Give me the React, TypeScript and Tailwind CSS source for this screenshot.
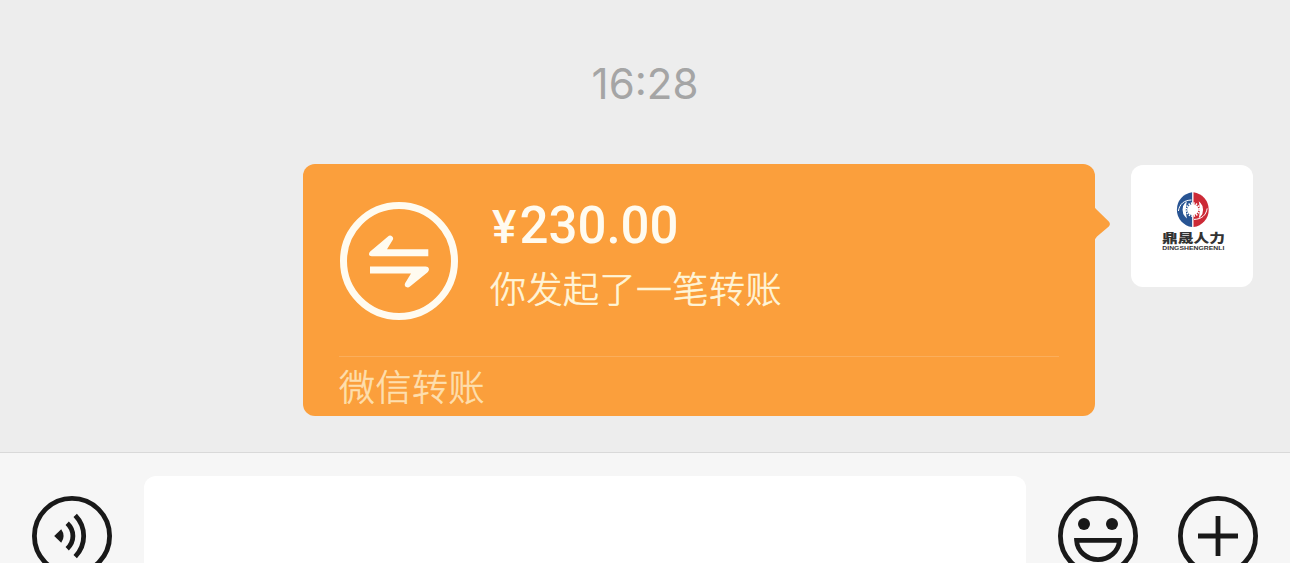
import React from "react";

const TransferIcon = () => (
  <svg viewBox="0 0 120 120" className="size-[120px] shrink-0 text-[#fffbf0]" fill="currentColor">
    <circle cx="60" cy="60" r="55.5" fill="none" stroke="currentColor" strokeWidth="7" />
    <path d="M89.3 48.2H48L53.8 38.8C55.3 36 51.4 33 49 35.4L31.2 50.4C29 52.8 30 55.3 32.8 55.3H89.3Z" />
    <path d="M31 65.4H86.5C90.3 65.4 91 68.8 88.6 71.2L71 85.6C68.4 87.8 64.4 85.4 66.2 82L72 72.6H31Z" />
  </svg>
);

const CompanyLogo = () => (
  <svg viewBox="0 0 122 122" className="size-full">
    <path d="M61.1 27.3A17.5 17.5 0 0 0 61.1 62Z" fill="#285493" />
    <path d="M62.5 27.3A17.5 17.5 0 0 1 62.5 62Z" fill="#cc2a36" />
    <circle cx="61.8" cy="44.6" r="5.6" fill="#fff" />
    <circle
      cx="61.8"
      cy="44.6"
      r="6.4"
      fill="none"
      stroke="#fff"
      strokeWidth="2"
      strokeDasharray="1.3 1.2"
    />
    <path d="M54.6 38.6C51.6 41.5 51.6 48 54.6 51C53.8 47 53.8 42.5 54.6 38.6Z" fill="#fff" stroke="#fff" strokeWidth="1.6" />
    <path d="M69 38.6C72 41.5 72 48 69 51C69.8 47 69.8 42.5 69 38.6Z" fill="#fff" stroke="#fff" strokeWidth="1.6" />
    <path d="M47.4 46C48.6 39 53 35.2 60.5 35" fill="none" stroke="#fff" strokeWidth="1" />
    <path d="M76.2 43.4C75 50.4 70.6 54.2 63 54.4" fill="none" stroke="#fff" strokeWidth="1" />
    <text
      x="31"
      y="78.2"
      textLength="63"
      lengthAdjust="spacingAndGlyphs"
      fill="#333"
      className="font-['Noto_Sans_CJK_SC',sans-serif] text-[12.5px] font-black"
    >
      鼎晟人力
    </text>
    <text
      x="31.3"
      y="85.4"
      textLength="62"
      lengthAdjust="spacingAndGlyphs"
      fill="#333"
      className="font-['Liberation_Sans',sans-serif] text-[5px] font-bold"
    >
      DINGSHENGRENLI
    </text>
  </svg>
);

const VoiceIcon = () => (
  <svg viewBox="0 0 80 80" className="size-20 shrink-0" fill="none" stroke="#191919" strokeWidth="4.8">
    <circle cx="40" cy="40" r="37.6" />
    <path d="M22.2 40L29.2 33.2Q34 40 29.2 46.8Z" fill="#191919" stroke="none" />
    <path d="M35.2 27.3C42.8 34.5 42.8 45.5 35.2 52.7" />
    <path d="M43.2 19.4C54.5 31 54.5 49 43.2 60.6" />
  </svg>
);

const EmojiIcon = () => (
  <svg viewBox="0 0 80 80" className="size-20 shrink-0" fill="none" stroke="#191919" strokeWidth="4.8">
    <circle cx="40" cy="40" r="37.6" />
    <circle cx="26" cy="28" r="6" fill="#191919" stroke="none" />
    <circle cx="54" cy="28" r="6" fill="#191919" stroke="none" />
    <path d="M18.6 44.4H61.4C60.8 55.5 51 63.6 40 63.6C29 63.6 19.2 55.5 18.6 44.4Z" />
  </svg>
);

const PlusIcon = () => (
  <svg viewBox="0 0 80 80" className="size-20 shrink-0" fill="none" stroke="#191919" strokeWidth="4.8">
    <circle cx="40" cy="40" r="37.6" />
    <path d="M40 20V60M20 40H60" />
  </svg>
);

const TransferBubble = () => (
  <div className="relative h-[252px] w-[792px] rounded-xl bg-[#fb9f3c] px-9 font-['Noto_Sans_CJK_SC',sans-serif]">
    <div className="flex h-[193px] items-start border-b border-[#fbae5b] pt-[37px]">
      <TransferIcon />
      <div className="ml-[31px]">
        <p className="mt-px h-[60px] font-['Roboto',sans-serif] text-[51px] leading-[48px] font-medium text-[#fffbf0]">
          <span className="mr-[3px] ml-0.5 text-[46px]">¥</span>230.00
        </p>
        <p className="-mt-[3px] text-[36px] leading-[56px] font-light tracking-[0.5px] text-[#fff5d8] [-webkit-text-stroke:0.6px_#fff5d8]">
          你发起了一笔转账
        </p>
      </div>
    </div>
    <p className="text-[36px] leading-[56px] font-light tracking-[0.5px] text-[#fedfae] [-webkit-text-stroke:0.6px_#fedfae]">
      微信转账
    </p>
    {/* bubble tail */}
    <svg viewBox="0 0 16 36" className="absolute top-[42px] -right-[15px] h-9 w-4" fill="#fb9f3c">
      <path d="M0 0Q1 2 2.5 3.5L14.8 15.5Q17 18 14.8 20.5L3 30.5Q1 32.5 0 36Z" />
    </svg>
  </div>
);

const App = () => {
  return (
    <div className="flex h-[563px] w-full flex-col overflow-hidden bg-[#ededed]">
      <main className="flex h-[452px] shrink-0 flex-col">
        <time className="mt-[59px] text-center font-['Inter',sans-serif] text-[42px] leading-[50px] text-[#a5a5a5]">
          16:28
        </time>
        <div className="mt-[55px] flex justify-end gap-9 pr-[37px]">
          <TransferBubble />
          <div className="mt-px size-[122px] overflow-hidden rounded-xl bg-white">
            <CompanyLogo />
          </div>
        </div>
      </main>

      <footer className="flex h-[167px] shrink-0 items-center border-t border-[#d9d9d9] bg-[#f6f6f6] px-8">
        <VoiceIcon />
        <div className="mx-8 h-[120px] flex-1 rounded-xl bg-white" />
        <div className="flex gap-10">
          <EmojiIcon />
          <PlusIcon />
        </div>
      </footer>
    </div>
  );
};

export default App;
